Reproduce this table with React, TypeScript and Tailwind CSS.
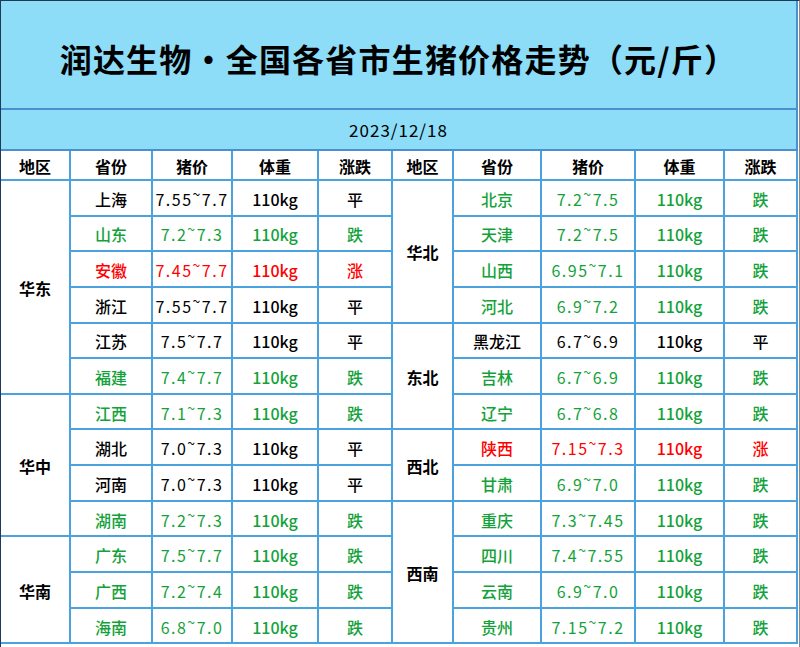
import React from "react";

type Row = { prov: string; price: string; trend: string; color: "k" | "g" | "r" };

const left: Row[] = [
  { prov: "上海", price: "7.55~7.7", trend: "平", color: "k" },
  { prov: "山东", price: "7.2~7.3", trend: "跌", color: "g" },
  { prov: "安徽", price: "7.45~7.7", trend: "涨", color: "r" },
  { prov: "浙江", price: "7.55~7.7", trend: "平", color: "k" },
  { prov: "江苏", price: "7.5~7.7", trend: "平", color: "k" },
  { prov: "福建", price: "7.4~7.7", trend: "跌", color: "g" },
  { prov: "江西", price: "7.1~7.3", trend: "跌", color: "g" },
  { prov: "湖北", price: "7.0~7.3", trend: "平", color: "k" },
  { prov: "河南", price: "7.0~7.3", trend: "平", color: "k" },
  { prov: "湖南", price: "7.2~7.3", trend: "跌", color: "g" },
  { prov: "广东", price: "7.5~7.7", trend: "跌", color: "g" },
  { prov: "广西", price: "7.2~7.4", trend: "跌", color: "g" },
  { prov: "海南", price: "6.8~7.0", trend: "跌", color: "g" },
];

const right: Row[] = [
  { prov: "北京", price: "7.2~7.5", trend: "跌", color: "g" },
  { prov: "天津", price: "7.2~7.5", trend: "跌", color: "g" },
  { prov: "山西", price: "6.95~7.1", trend: "跌", color: "g" },
  { prov: "河北", price: "6.9~7.2", trend: "跌", color: "g" },
  { prov: "黑龙江", price: "6.7~6.9", trend: "平", color: "k" },
  { prov: "吉林", price: "6.7~6.9", trend: "跌", color: "g" },
  { prov: "辽宁", price: "6.7~6.8", trend: "跌", color: "g" },
  { prov: "陕西", price: "7.15~7.3", trend: "涨", color: "r" },
  { prov: "甘肃", price: "6.9~7.0", trend: "跌", color: "g" },
  { prov: "重庆", price: "7.3~7.45", trend: "跌", color: "g" },
  { prov: "四川", price: "7.4~7.55", trend: "跌", color: "g" },
  { prov: "云南", price: "6.9~7.0", trend: "跌", color: "g" },
  { prov: "贵州", price: "7.15~7.2", trend: "跌", color: "g" },
];

const leftRegions: Record<number, { name: string; span: string }> = {
  0: { name: "华东", span: "row-span-6" },
  6: { name: "华中", span: "row-span-4" },
  10: { name: "华南", span: "row-span-3" },
};
const rightRegions: Record<number, { name: string; span: string }> = {
  0: { name: "华北", span: "row-span-4" },
  4: { name: "东北", span: "row-span-3" },
  7: { name: "西北", span: "row-span-2" },
  9: { name: "西南", span: "row-span-4" },
};

const colorClass = (c: Row["color"]) =>
  c === "g" ? "text-[#13a23a]" : c === "r" ? "text-[#ff0000]" : "text-black";

function Price({ text }: { text: string }) {
  const [a, b] = text.split("~");
  return (
    <span className="tracking-[1.5px] font-normal">
      {a}
      <span className="relative -top-[6px] text-[14px]">~</span>
      {b}
    </span>
  );
}

function Cell({ children, className = "" }: { children: React.ReactNode; className?: string }) {
  return (
    <div className={`bg-white flex items-center justify-center text-[16px] pt-[2px] ${className}`}>
      {children}
    </div>
  );
}

export default function App() {
  const headers = ["地区", "省份", "猪价", "体重", "涨跌", "地区", "省份", "猪价", "体重", "涨跌"];
  const cells: React.ReactNode[] = [];
  headers.forEach((h, i) =>
    cells.push(
      <Cell key={`h${i}`} className="font-semibold text-black">
        {h}
      </Cell>
    )
  );
  for (let i = 0; i < 13; i++) {
    const lr = leftRegions[i];
    if (lr)
      cells.push(
        <Cell key={`lr${i}`} className={`${lr.span} col-start-1 font-bold text-black`}>
          {lr.name}
        </Cell>
      );
    const l = left[i];
    const lc = colorClass(l.color);
    cells.push(
      <Cell key={`lp${i}`} className={`col-start-2 font-medium ${lc}`}>{l.prov}</Cell>,
      <Cell key={`lx${i}`} className={`${lc}`}><Price text={l.price} /></Cell>,
      <Cell key={`lw${i}`} className={`font-medium ${lc}`}>110kg</Cell>,
      <Cell key={`lt${i}`} className={`font-medium ${lc}`}>{l.trend}</Cell>
    );
    const rr = rightRegions[i];
    if (rr)
      cells.push(
        <Cell key={`rr${i}`} className={`${rr.span} col-start-6 font-bold text-black`}>
          {rr.name}
        </Cell>
      );
    const r = right[i];
    const rc = colorClass(r.color);
    cells.push(
      <Cell key={`rp${i}`} className={`col-start-7 font-medium ${rc}`}>{r.prov}</Cell>,
      <Cell key={`rx${i}`} className={`${rc}`}><Price text={r.price} /></Cell>,
      <Cell key={`rw${i}`} className={`font-medium ${rc}`}>110kg</Cell>,
      <Cell key={`rt${i}`} className={`font-medium ${rc}`}>{r.trend}</Cell>
    );
  }

  return (
    <div
      className="w-[800px] h-[647px] bg-white border-l border-t border-[#1d3a58] border-r border-r-[#8a8a8a] overflow-hidden flex"
      style={{ fontFamily: '"Noto Sans CJK SC", "Noto Sans", sans-serif' }}
    >
      <div className="w-[797px] flex flex-col">
        <div className="h-[109px] bg-[#8ddcf8] border-b-2 border-r-2 border-[#4b8fd0] flex items-center justify-center">
          <h1 className="text-[32px] font-bold text-black tracking-[1.2px] pt-[7px]">
            润达生物・全国各省市生猪价格走势（元/斤）
          </h1>
        </div>
        <div className="h-[41px] bg-[#8ddcf8] border-b-2 border-r-2 border-[#4b8fd0] flex items-center justify-center">
          <span className="text-[17px] tracking-[1px] text-black">2023/12/18</span>
        </div>
        <div className="grid grid-cols-[68px_80px_78px_84px_72px_59px_86px_92px_87px_71px] grid-rows-[28px_repeat(13,33.65px)] gap-[2px] bg-[#4aa3df] pr-[2px] pb-[2px]">
          {cells}
        </div>
      </div>
    </div>
  );
}
